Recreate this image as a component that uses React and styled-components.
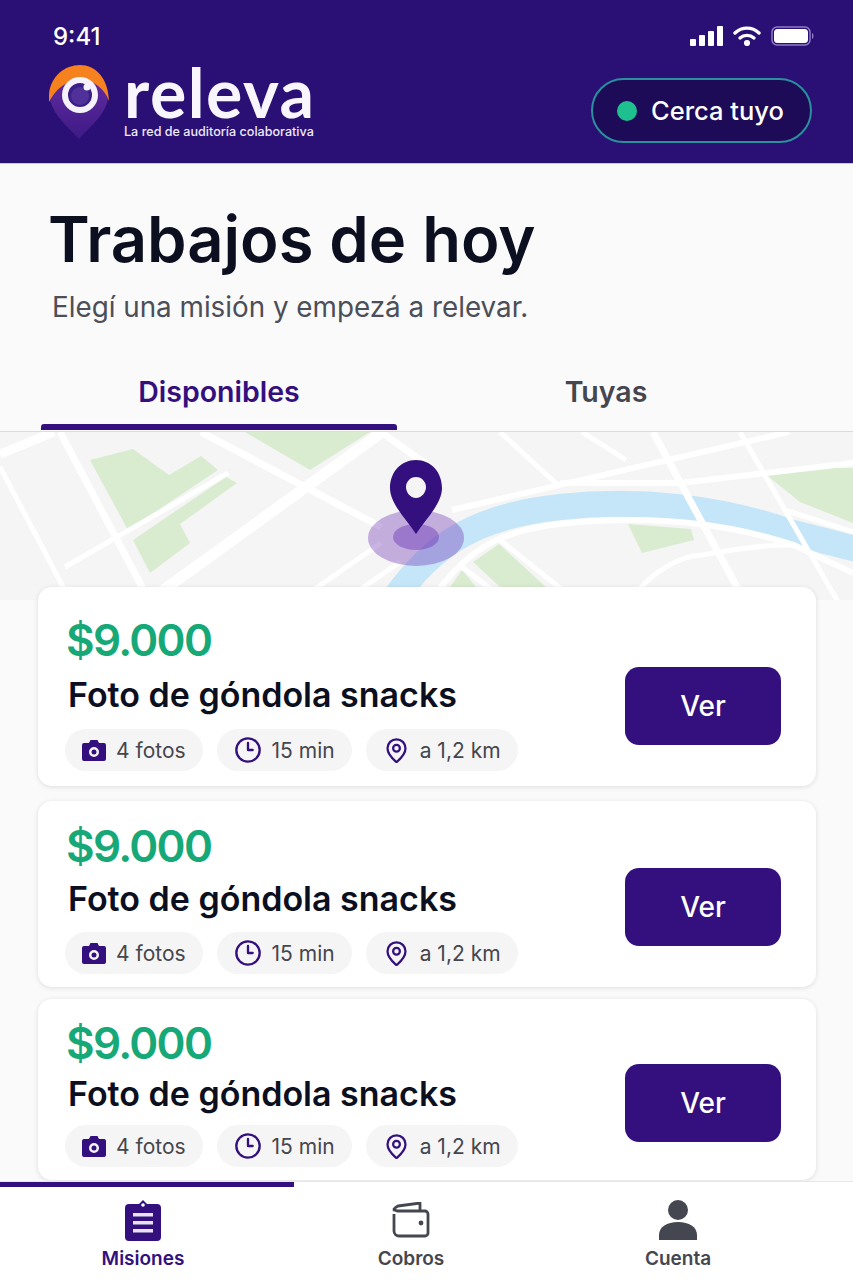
import React from 'react'
import styled, { createGlobalStyle } from 'styled-components'
import { Clock3, MapPin } from 'lucide-react'

const PURPLE = '#33107e'

const GlobalStyle = createGlobalStyle`
  html, body {
    margin: 0;
    padding: 0;
    background: #fafafa;
  }
  * { box-sizing: border-box; }
`

const cards = [
  { id: 1, top: 28, titleGap: 8, chipGap: 12, height: 199, btnTop: 80, after: 15 },
  { id: 2, top: 20, titleGap: 6, chipGap: 11, height: 186, btnTop: 67, after: 12 },
  { id: 3, top: 19, titleGap: 4, chipGap: 9, height: 181, btnTop: 65, after: 0 },
]

const Logo = () => (
  <LogoMark viewBox="0 0 60 74">
    <defs>
      <linearGradient id="pinFill" x1="0" y1="0" x2="0" y2="1">
        <stop offset="0" stopColor="#6a2fa6" />
        <stop offset="1" stopColor="#3d1a85" />
      </linearGradient>
    </defs>
    <path d="M1 31C1 14 14 1 30 1s29 13 29 30c0 16-17 30-29 43C18 61 1 47 1 31Z" fill="url(#pinFill)" />
    <path d="M0 37C-2 14 14 0 31 0c15 0 28 12 29 36-5-13-15-21-29-21C17 15 7 24 0 37Z" fill="#f5821f" />
    <circle cx="31" cy="30" r="15" fill="#3b1f87" stroke="#f6f2fb" strokeWidth="6" />
    <circle cx="31" cy="31" r="9" fill="#4f3199" />
    <circle cx="38" cy="22" r="3.5" fill="#f6f2fb" />
  </LogoMark>
)

const Signal = () => (
  <svg width="33" height="20" viewBox="0 0 33 20" fill="#fff">
    <rect x="0" y="13" width="6" height="7" rx="1" />
    <rect x="9" y="9" width="6" height="11" rx="1" />
    <rect x="18" y="5" width="6" height="15" rx="1" />
    <rect x="27" y="0" width="6" height="20" rx="1" />
  </svg>
)

const Wifi = () => (
  <svg width="28" height="20" viewBox="0 0 28 20" fill="none" stroke="#fff" strokeWidth="3.4" strokeLinecap="round">
    <path d="M2 7c7-6.500 17-6.500 24 0" />
    <path d="M7 12c4-3.500 10-3.500 14 0" />
    <circle cx="14" cy="17" r="1.400" fill="#fff" />
  </svg>
)

const Battery = () => (
  <svg width="44" height="20" viewBox="0 0 44 20" fill="none">
    <rect x="1" y="1" width="38" height="18" rx="5" stroke="#8f7bc6" strokeWidth="1.500" />
    <rect x="3" y="3" width="34" height="14" rx="3.500" fill="#fff" />
    <path d="M41 7c2 .5 2 5.500 0 6Z" fill="#8f7bc6" />
  </svg>
)

const Pin = () => (
  <PinLayer viewBox="0 0 853 168">
    <ellipse cx="416" cy="106" rx="48" ry="28" fill="#6a2fb5" opacity="0.36" />
    <ellipse cx="416" cy="105" rx="23" ry="13" fill="#6a2fb5" opacity="0.42" />
    <path fillRule="evenodd" fill={PURPLE} d="M416 28c15 0 26 12 26 28 0 16-17 32-26 46-9-14-26-30-26-46 0-16 11-28 26-28Zm0 17c-6 0-10 5-10 10s4 11 10 11 10-6 10-11-4-10-10-10Z" />
  </PinLayer>
)

const MapDrawing = () => (
  <MapSvg viewBox="0 0 853 168" preserveAspectRatio="none">
    <rect width="853" height="168" fill="#f5f5f5" />
    <g fill="#d9ecd0">
      <polygon points="245,0 370,0 310,38" />
      <polygon points="90,28 133,17 169,43 201,24 218,38 128,98" />
      <polygon points="133,108 226,45 237,51 180,92 190,111 150,141" />
      <polygon points="764,41 805,36 853,36 853,91 800,70" />
      <polygon points="628,92 691,97 694,108 642,121" />
      <polygon points="473,130 499,112 560,168 514,168" />
      <polygon points="441,168 462,138 487,168" />
    </g>
    <path d="M385 180C425 120 465 85 560 75C640 66 720 76 790 100L860 118" fill="none" stroke="#c5e5f8" strokeWidth="26" />
    <g fill="none" stroke="#fff">
      <path strokeWidth="11" d="M147 170L385 -2" />
      <path strokeWidth="7" d="M60 0L150 170M201 0L381 95M653 0L745 170M381 0L430 35" />
      <path strokeWidth="5" d="M0 35L71 170M65 135L228 41M740 0L838 170M500 0L560 55M582 0L626 28M785 78L853 100" />
      <path strokeWidth="9" d="M0 22L54 0" />
      <path strokeWidth="6" d="M452 78L789 0M560 51L680 51L853 31" />
      <path strokeWidth="6" d="M430 170C470 110 510 95 580 90C660 84 730 92 794 113L853 141" />
      <path strokeWidth="5" d="M631 168C650 140 680 124 702 123C730 118 770 112 794 113M299 168L381 111M345 168L400 130M500 108L575 168M462 135L505 168" />
    </g>
  </MapSvg>
)

const Camera = () => (
  <svg width="24" height="22" viewBox="0 0 24 22">
    <path fillRule="evenodd" fill={PURPLE} d="M2 4h5l1.500-3h7L17 4h5a2 2 0 0 1 2 2v14a2 2 0 0 1-2 2H2a2 2 0 0 1-2-2V6a2 2 0 0 1 2-2Zm10 4a5 5 0 1 0 0 10 5 5 0 0 0 0-10Zm0 2.500a2.500 2.500 0 1 1 0 5 2.500 2.500 0 0 1 0-5Z" />
  </svg>
)

const Clipboard = () => (
  <svg width="36" height="41" viewBox="0 0 36 41">
    <path fill={PURPLE} d="M4 4h10l4-4 4 4h10a4 4 0 0 1 4 4v29a4 4 0 0 1-4 4H4a4 4 0 0 1-4-4V8a4 4 0 0 1 4-4Z" />
    <circle cx="18" cy="5" r="1.800" fill="#fff" />
    <g fill="#e9e2f5">
      <rect x="8" y="13" width="20" height="3.500" />
      <rect x="8" y="21" width="20" height="3.500" />
      <rect x="8" y="29" width="20" height="3.500" />
    </g>
  </svg>
)

const WalletIcon = () => (
  <svg width="38" height="36" viewBox="0 0 38 36" fill="none" stroke="#444650" strokeWidth="2.800" strokeLinejoin="round">
    <path d="M2 12v17a5 5 0 0 0 5 5h26a3 3 0 0 0 3-3V12a3 3 0 0 0-3-3H6a4 4 0 0 1-4-3" />
    <path d="M2 8c0-2 2-3 4-4l22-3v7" strokeLinecap="round" />
    <circle cx="29" cy="21" r="2.400" fill="#444650" stroke="none" />
  </svg>
)

const Person = () => (
  <svg width="38" height="40" viewBox="0 0 38 40" fill="#444650">
    <ellipse cx="19" cy="10" rx="10" ry="10" />
    <path d="M0 40v-5c0-8 8-13 19-13s19 5 19 13v5Z" />
  </svg>
)

const MissionCard = ({ top, titleGap, chipGap, height, btnTop, after }) => (
  <Card $height={height} $after={after}>
    <CardBody $top={top}>
      <Price>$9.000</Price>
      <CardTitle $gap={titleGap}>Foto de góndola snacks</CardTitle>
      <Chips $gap={chipGap}>
        <Chip><Camera />4 fotos</Chip>
        <Chip $right={17}><Clock3 size={28} color={PURPLE} strokeWidth={2} />15 min</Chip>
        <Chip $right={17}><MapPin size={27} color={PURPLE} strokeWidth={2} />a 1,2 km</Chip>
      </Chips>
    </CardBody>
    <ViewButton $top={btnTop}>Ver</ViewButton>
  </Card>
)

export default function App() {
  return (
    <Page>
      <GlobalStyle />
      <Header>
        <StatusBar>
          <Time>9:41</Time>
          <StatusIcons>
            <Signal />
            <Wifi />
            <Battery />
          </StatusIcons>
        </StatusBar>
        <BrandRow>
          <Brand>
            <Logo />
            <Wordmark>
              <BrandName>releva</BrandName>
              <Tagline>La red de auditoría colaborativa</Tagline>
            </Wordmark>
          </Brand>
          <NearbyPill>
            <Dot />
            Cerca tuyo
          </NearbyPill>
        </BrandRow>
      </Header>

      <Hero>
        <Title>Trabajos de hoy</Title>
        <Subtitle>Elegí una misión y empezá a relevar.</Subtitle>
      </Hero>

      <Tabs>
        <Tab $active>Disponibles</Tab>
        <Tab>Tuyas</Tab>
      </Tabs>

      <MapArea>
        <MapDrawing />
        <Pin />
      </MapArea>

      <CardList>
        {cards.map(card => (
          <MissionCard key={card.id} {...card} />
        ))}
      </CardList>

      <BottomNav>
        <NavProgress />
        <NavItem $active>
          <NavIcon><Clipboard /></NavIcon>
          Misiones
        </NavItem>
        <NavItem>
          <NavIcon><WalletIcon /></NavIcon>
          Cobros
        </NavItem>
        <NavItem>
          <NavIcon><Person /></NavIcon>
          Cuenta
        </NavItem>
      </BottomNav>
    </Page>
  )
}

const Page = styled.div`
  width: 853px;
  height: 1282px;
  overflow: hidden;
  display: flex;
  flex-direction: column;
  background: #fafafa;
  font-family: Inter, "Liberation Sans", sans-serif;
`
const Header = styled.header`
  height: 164px;
  flex: none;
  background: #2a0f74;
  border-bottom: 1px solid #cfc4e8;
  padding: 22px 38px 0 49px;
`
const StatusBar = styled.div`
  display: flex;
  justify-content: space-between;
  align-items: center;
  height: 28px;
  padding-left: 4px;
`
const Time = styled.div`
  font-size: 24px;
  font-weight: 500;
  color: #fff;
`
const StatusIcons = styled.div`
  display: flex;
  align-items: center;
  gap: 10px;
`
const BrandRow = styled.div`
  display: flex;
  justify-content: space-between;
  align-items: flex-start;
  margin-top: 14px;
`
const Brand = styled.div`
  display: flex;
  align-items: flex-start;
  gap: 15px;
  margin-top: 1px;
`
const LogoMark = styled.svg`
  width: 60px;
  height: 74px;
  display: block;
`
const Wordmark = styled.div`
  display: flex;
  flex-direction: column;
  margin-top: -3px;
`
const BrandName = styled.div`
  font-family: Lato, Inter, sans-serif;
  font-size: 68px;
  line-height: 60px;
  font-weight: 700;
  letter-spacing: 1.5px;
  color: #f8f6fc;
`
const Tagline = styled.div`
  margin-top: 3px;
  font-size: 12.6px;
  line-height: 14px;
  font-weight: 500;
  color: #eee9f7;
  white-space: nowrap;
`
const NearbyPill = styled.div`
  width: 221px;
  height: 65px;
  margin: 14px 3px 0 0;
  display: flex;
  align-items: center;
  gap: 14px;
  padding-left: 24px;
  border-radius: 33px;
  border: 2px solid #2b8f9d;
  background: #1d0b58;
  color: #fff;
  font-size: 25.5px;
  font-weight: 500;
`
const Dot = styled.span`
  width: 20px;
  height: 20px;
  border-radius: 50%;
  background: #1fc08f;
`
const Hero = styled.section`
  padding: 37px 0 0 48px;
  flex: none;
`
const Title = styled.h1`
  margin: 0;
  font-size: 63.3px;
  line-height: 76px;
  font-weight: 600;
  color: #0b0f20;
`
const Subtitle = styled.p`
  margin: 13px 0 0 4px;
  font-size: 27.8px;
  line-height: 34px;
  font-weight: 400;
  color: #4c4e58;
`
const Tabs = styled.nav`
  flex: none;
  height: 62px;
  margin-top: 46px;
  padding: 0 38px 0 41px;
  display: grid;
  grid-template-columns: 356px 1fr;
  border-bottom: 1px solid #dcdcdc;
`
const Tab = styled.div`
  position: relative;
  display: flex;
  justify-content: center;
  padding-top: 4px;
  font-size: 28.5px;
  line-height: 36px;
  font-weight: 600;
  color: ${p => (p.$active ? PURPLE : '#45464e')};
  &::after {
    content: '';
    display: ${p => (p.$active ? 'block' : 'none')};
    position: absolute;
    left: 0;
    right: 0;
    bottom: 1px;
    height: 6px;
    border-radius: 3px 3px 0 0;
    background: ${PURPLE};
  }
`
const MapArea = styled.div`
  flex: none;
  height: 168px;
  position: relative;
`
const MapSvg = styled.svg`
  width: 853px;
  height: 168px;
  display: block;
`
const PinLayer = styled.svg`
  position: absolute;
  left: 0;
  top: 0;
  width: 853px;
  height: 168px;
`
const CardList = styled.div`
  flex: none;
  margin-top: -13px;
  padding: 0 37px 0 38px;
  display: flex;
  flex-direction: column;
  position: relative;
`
const Card = styled.article`
  height: ${p => p.$height}px;
  margin-bottom: ${p => p.$after}px;
  display: flex;
  justify-content: space-between;
  background: #fff;
  border-radius: 14px;
  box-shadow: 0 1px 5px rgba(20, 20, 40, 0.12);
  padding: 0 35px 0 27px;
`
const CardBody = styled.div`
  padding-top: ${p => p.$top}px;
`
const Price = styled.div`
  margin-left: 1px;
  font-size: 44px;
  line-height: 50px;
  font-weight: 600;
  letter-spacing: -1.7px;
  color: #17a878;
`
const CardTitle = styled.h2`
  margin: ${p => p.$gap}px 0 0 3px;
  font-size: 34px;
  line-height: 44px;
  font-weight: 600;
  color: #0b0f20;
  white-space: nowrap;
`
const Chips = styled.div`
  display: flex;
  gap: 14px;
  margin-top: ${p => p.$gap}px;
`
const Chip = styled.div`
  height: 42px;
  display: flex;
  align-items: center;
  gap: 10px;
  padding: 0 ${p => p.$right || 17}px 0 17px;
  border-radius: 21px;
  background: #f5f5f5;
  color: #45464e;
  font-size: 21px;
  white-space: nowrap;
`
const ViewButton = styled.button`
  width: 156px;
  height: 78px;
  margin-top: ${p => p.$top}px;
  border: 0;
  border-radius: 14px;
  background: ${PURPLE};
  color: #fff;
  font-family: inherit;
  font-size: 28px;
  font-weight: 500;
`
const BottomNav = styled.nav`
  position: absolute;
  left: 0;
  top: 1181px;
  width: 853px;
  height: 101px;
  background: #fff;
  border-top: 1px solid #e8e8e8;
  display: grid;
  grid-template-columns: 286px 250px 284px;
`
const NavProgress = styled.div`
  position: absolute;
  left: 0;
  top: 0;
  width: 294px;
  height: 5px;
  background: ${PURPLE};
`
const NavItem = styled.div`
  display: flex;
  flex-direction: column;
  align-items: center;
  font-size: 19px;
  line-height: 24px;
  font-weight: 600;
  color: ${p => (p.$active ? PURPLE : '#45464e')};
`
const NavIcon = styled.div`
  height: 42px;
  margin-top: 17px;
  margin-bottom: 6px;
  display: flex;
  align-items: center;
`
